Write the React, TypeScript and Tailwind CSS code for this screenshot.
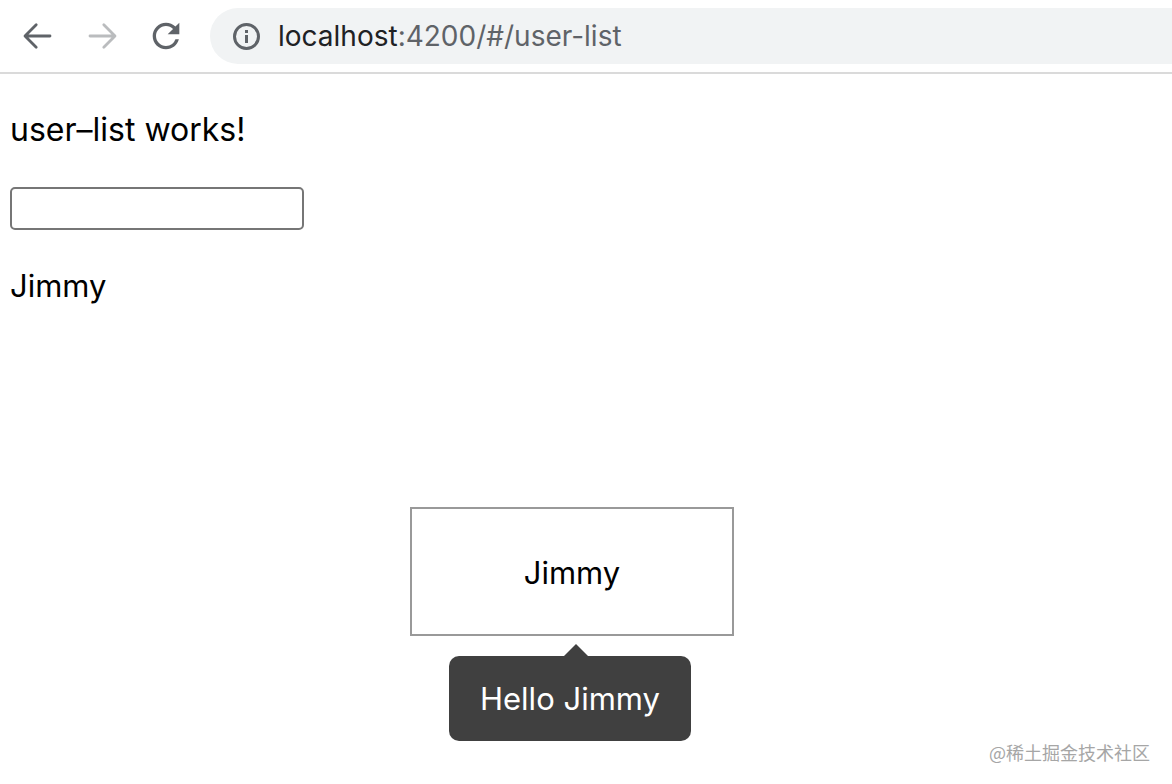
import { useState } from "react";
import { MdRefresh } from "react-icons/md";

const ArrowIcon = ({ className }: { className?: string }) => (
  <svg
    viewBox="0 0 40 40"
    className={className}
    fill="none"
    stroke="currentColor"
    strokeWidth="2.8"
    strokeLinecap="round"
    strokeLinejoin="round"
  >
    <path d="M32 20H8M18.2 8.7L7 20L18.2 31.3" />
  </svg>
);

const InfoIcon = ({ className }: { className?: string }) => (
  <svg
    viewBox="0 0 32 32"
    className={className}
    fill="none"
    stroke="currentColor"
    strokeWidth="3"
  >
    <circle cx="16.5" cy="16.5" r="12" />
    <path d="M16.5 15V23M16.5 10V13" />
  </svg>
);

const Toolbar = () => {
  return (
    <header className="flex items-center gap-4 border-b-2 border-[#dadada] py-2 pl-[10px]">
      <nav className="flex gap-2 text-[#5f6368]">
        <button
          aria-label="Back"
          className="flex h-14 w-14 items-center justify-center"
        >
          <ArrowIcon className="h-10 w-10" />
        </button>
        <button
          aria-label="Forward"
          disabled
          className="flex h-14 w-14 items-center justify-center text-[#babcbe]"
        >
          <ArrowIcon className="h-10 w-10 rotate-180" />
        </button>
        <button
          aria-label="Reload"
          className="flex h-14 w-14 items-center justify-center"
        >
          <MdRefresh className="h-10 w-10" />
        </button>
      </nav>
      <div className="flex h-14 flex-1 items-center gap-4 rounded-l-full bg-[#f1f3f4] pl-5">
        <button aria-label="View site information" className="text-[#5f6368]">
          <InfoIcon className="h-8 w-8" />
        </button>
        <span className="font-['Inter'] text-[28px] text-[#5f6368]">
          <span className="text-[#202124]">localhost</span>
          :4200/#/user-list
        </span>
      </div>
    </header>
  );
};

const UserList = ({ name }: { name: string }) => {
  const [value, setValue] = useState("");

  return (
    <main className="px-[10px] pt-8">
      <p className="leading-[48px]">user–list works!</p>
      <input
        type="text"
        aria-label="User name"
        value={value}
        onChange={(e) => setValue(e.target.value)}
        className="mt-[33px] block h-[43px] w-[294px] rounded-[5px] border-2 border-[#767676] px-1 text-[26px] outline-none"
      />
      <p className="mt-8 text-[31px] leading-[48px]">{name}</p>

      <div className="relative mt-[197px] ml-[400px] h-[129px] w-[324px] border-2 border-[#999999] text-center text-[31px] leading-[128px]">
        {name}
        <div
          role="tooltip"
          className="absolute top-full left-[37px] mt-[22px] rounded-[10px] bg-[#404040] px-[31px] py-5 leading-[45px] whitespace-nowrap text-white"
        >
          <svg
            viewBox="0 0 24 12"
            className="absolute bottom-full left-1/2 ml-[-6px] h-3 w-6 fill-[#404040]"
          >
            <path d="M0 12L12 0L24 12Z" />
          </svg>
          Hello {name}
        </div>
      </div>
    </main>
  );
};

export default function App() {
  return (
    <div className="relative min-h-screen overflow-hidden bg-white font-['Inter','Noto_Sans_CJK_SC',sans-serif] text-[32px] text-black">
      <Toolbar />
      <UserList name="Jimmy" />
      <span className="absolute right-[22px] bottom-[18px] font-['Noto_Sans_CJK_SC',sans-serif] text-lg leading-7 text-[#a6a6a6]">
        @稀土掘金技术社区
      </span>
    </div>
  );
}
